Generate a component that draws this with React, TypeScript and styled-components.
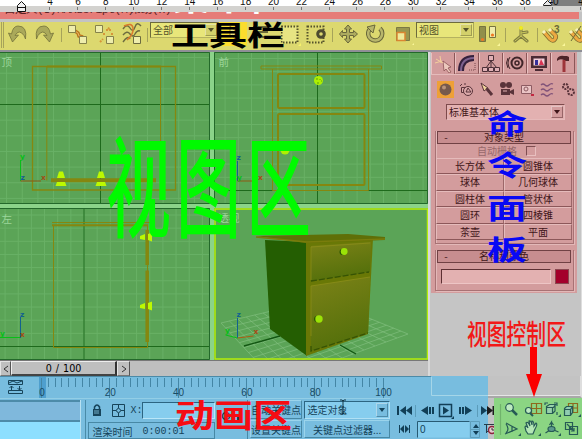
import React from "react";
import styled, { createGlobalStyle } from "styled-components";

const Global = createGlobalStyle`
  * { box-sizing: border-box; }
  html, body { margin: 0; overflow: hidden; }
  body { font-family: "Liberation Sans", "Noto Sans CJK SC", sans-serif; font-size: 12px; }
  svg { display: block; flex: none; }
`;

const Page = styled.div`
  position: relative;
  width: 582px;
  height: 439px;
  overflow: hidden;
  background: #c3c3c3;
  display: flex;
  flex-direction: column;
`;

/* ---------- header ---------- */
const Ruler = styled.div`
  height: 12px;
  background: #d3d2cf;
  overflow: hidden;
`;
const MenuStrip = styled.div`
  height: 7px;
  width: 579px;
  background: #e67c78;
  overflow: hidden;
  display: flex;
  gap: 9px;
  padding-left: 4px;
  color: #5b2224;
  white-space: nowrap;
`;
const MenuItem = styled.span<{ $w: number }>`
  width: ${(p) => p.$w}px;
  flex: none;
  font: 11.5px/12px "Liberation Mono", "Noto Sans CJK SC", monospace;
  letter-spacing: -0.5px;
  margin-top: -8px;
`;
const MenuTitle = styled.span`
  color: #fff;
  font: 700 38px/38px "Noto Sans CJK SC", sans-serif;
  height: 38px;
  margin-top: -31px;
  transform: scaleY(0.7);
`;
const Toolbar = styled.div`
  height: 28px;
  margin-top: 3px;
  background: #dcd86f;
  display: flex;
  align-items: flex-start;
  flex: none;
`;
const ToolSlot = styled.div<{ $w: number; $active?: boolean }>`
  width: ${(p) => p.$w}px;
  height: ${(p) => (p.$active ? 24 : 28)}px;
  flex: none;
  background: ${(p) => (p.$active ? "#fbdc2e" : "transparent")};
`;
const ToolCombo = styled.div<{ $w: number }>`
  width: ${(p) => p.$w}px;
  height: 16px;
  flex: none;
  display: flex;
  justify-content: space-between;
  padding-left: 2px;
  border: 1px solid #6d6b3c;
  border-right-color: #a9a75b;
  border-bottom-color: #b5b260;
  background: #e8e67a;
  color: #55532b;
  font: 10px/13px "Noto Sans CJK SC", sans-serif;
`;
const DropButton = styled.span<{ $bg: string; $fg: string }>`
  width: 12px;
  margin: 1px;
  display: flex;
  align-items: center;
  justify-content: center;
  background: ${(p) => p.$bg};
  border: 1px solid ${(p) => p.$fg}66;
  border-top-color: #ffffff66;
  border-left-color: #ffffff66;
  &::after {
    content: "";
    border: 3.5px solid transparent;
    border-top: 4px solid ${(p) => p.$fg};
    border-bottom: 0;
  }
`;
const HeaderEdge = styled.div`
  height: 2px;
  background: #8f8f96;
  flex: none;
`;

/* ---------- viewports ---------- */
const Main = styled.div`
  height: 308px;
  display: flex;
  flex: none;
`;
const Views = styled.div`
  width: 428px;
  display: grid;
  grid-template-columns: 210px 214px;
  grid-template-rows: 152px 152px;
  gap: 4px;
  background: #8bd389;
`;

/* ---------- command panel ---------- */
const PanelColumn = styled.div`
  flex: 1;
  border-left: 2px solid #d9d9d9;
  padding-left: 1px;
  border-right: 1px solid #dedede;
  background: #c5c5c5;
`;
const CommandPanel = styled.div`
  width: 146px;
  height: 241px;
  background: #d39c9d;
  color: #3f1519;
  font: 10px/12px "Noto Sans CJK SC", sans-serif;
  display: flex;
  flex-direction: column;
`;
const Tabs = styled.div`
  display: flex;
  height: 23px;
  flex: none;
  padding-top: 1px;
  border-bottom: 1px solid #e5bbbb;
`;
const Tab = styled.div<{ $on?: boolean }>`
  width: 24px;
  height: 21px;
  border-right: 1px solid #8a5658;
  border-left: 1px solid #e9c1c1;
  border-bottom: ${(p) => (p.$on ? 0 : "1px solid #b37b7c")};
  display: flex;
  align-items: center;
  justify-content: center;
`;
const Categories = styled.div`
  display: flex;
  height: 29px;
  flex: none;
  padding: 6px 0 0 6px;
  gap: 3px;
`;
const Category = styled.div<{ $on?: boolean }>`
  width: 17.4px;
  height: 17px;
  display: flex;
  align-items: center;
  justify-content: center;
  background: ${(p) => (p.$on ? "#eea037" : "transparent")};
`;
const KindCombo = styled.div`
  width: 119px;
  height: 16px;
  flex: none;
  margin: 0 0 11px 15px;
  border: 1px solid #7d4a4c;
  border-right-color: #e6baba;
  border-bottom-color: #e6baba;
  background: #e3b1b1;
  display: flex;
  justify-content: space-between;
  padding-left: 2px;
  line-height: 13px;
`;
const Rollout = styled.div<{ $h: number }>`
  width: 139px;
  height: ${(p) => p.$h}px;
  flex: none;
  margin: 0 0 6px 4px;
  border: 1px solid #a87274;
  box-shadow: inset 1px 0 #e3b8b8, 1px 1px #e3b8b8;
  border-top: 0;
`;
const RolloutTitle = styled.div`
  width: 134px;
  height: 13px;
  margin: 0 0 0 1px;
  border: 1px solid #704144;
  background: #c78d8f;
  display: grid;
  grid-template-columns: 16px 1fr 16px;
  text-align: center;
  line-height: 10px;
`;
const AutoGrid = styled.div`
  height: 14px;
  padding-left: 41px;
  display: flex;
  align-items: center;
  gap: 9px;
  color: #97686b;
`;
const Check = styled.span`
  width: 10px;
  height: 10px;
  border: 1px solid #7f4e51;
  border-right-color: #e8bfbf;
  border-bottom-color: #e8bfbf;
`;
const ObjectGrid = styled.div`
  display: grid;
  grid-template-columns: 68px 68px;
  grid-auto-rows: 16.4px;
`;
const ObjectButton = styled.div`
  text-align: center;
  line-height: 14px;
  border: 1px solid #e5bbbb;
  border-right-color: #9c6769;
  border-bottom-color: #8c5759;
`;
const NameRow = styled.div`
  display: flex;
  gap: 4px;
  margin: 6px 0 0 5px;
`;
const NameField = styled.div`
  width: 110px;
  height: 15px;
  background: #e3b1b1;
  border: 1px solid #5d3033;
  border-right-color: #edc5c5;
  border-bottom-color: #edc5c5;
`;
const Swatch = styled.div`
  width: 14px;
  height: 15px;
  background: #a4002b;
  border: 1px solid #8b4850;
`;

/* ---------- bottom ---------- */
const SliderRow = styled.div`
  height: 16px;
  display: flex;
  flex: none;
  background: #bfbfbf;
`;
const SliderTrack = styled.div`
  width: 428px;
  display: flex;
  border-top: 1px solid #777;
`;
const SliderArrow = styled.div<{ $w: number }>`
  width: ${(p) => p.$w}px;
  border: 1px solid #e4e4e4;
  border-right-color: #555;
  border-bottom-color: #777;
  display: flex;
  align-items: center;
  justify-content: center;
`;
const SliderThumb = styled.div`
  width: 106px;
  border: 1px solid #eee;
  border-right: 2px solid #333;
  border-bottom: 2px solid #444;
  text-align: center;
  font: 9.6px/13px "DejaVu Sans", sans-serif;
  word-spacing: 1px;
`;
const PanelTail = styled.div`
  flex: 1;
  border-left: 2px solid #d9d9d9;
  background: #c5c5c5;
  border-right: 1px solid #dedede;
`;
const Bottom = styled.div`
  display: flex;
  height: 63px;
`;
const Blue = styled.div`
  width: 488px;
  background: #78bddf;
  color: #14435a;
`;
const RightEnd = styled.div`
  flex: 1;
  display: flex;
  flex-direction: column;
`;
const RightGap = styled.div`
  height: 22px;
  border-bottom: 2px solid #a9a9a9;
  border-right: 2px solid #dedede;
  box-shadow: inset 0 -1px #e6e6e6;
`;
const NavGreen = styled.div`
  height: 41px;
  margin-left: 6px;
  background: #8bd583;
`;
const Controls = styled.div`
  display: flex;
  height: 39px;
  font: 10px/14px "Noto Sans CJK SC", sans-serif;
`;
const Listener = styled.div`
  width: 81px;
  display: flex;
  flex-direction: column;
  border-right: 1px solid #b7e1f2;
`;
const ListenerRow = styled.div<{ $bg: string }>`
  flex: 1;
  background: ${(p) => p.$bg};
  border-top: 2px solid #4d8ba9;
`;
const Status = styled.div`
  width: 131px;
  margin-left: 4px;
  border-left: 1px solid #498ba8;
`;
const CoordRow = styled.div`
  display: flex;
  height: 22px;
  align-items: center;
  padding: 0 0 2px 5px;
  gap: 4px;
`;
const CoordField = styled.div`
  flex: 1;
  height: 17px;
  margin-left: -5px;
  background: #86cdee;
  border: 1px solid #2c6582;
  border-right-color: #b9e6f8;
  border-bottom-color: #b9e6f8;
`;
const StatusText = styled.div`
  height: 17px;
  margin-left: 2px;
  padding-left: 4px;
  display: flex;
  gap: 10px;
  border: 1px solid #4788a5;
  line-height: 17px;
`;
const Mono = styled.span`
  font: 10px/17px "Liberation Mono", monospace;
`;
const KeyButton = styled.div`
  width: 33px;
  border-right: 1px solid #4788a5;
  padding: 8px 0 0 4px;
`;
const KeyColumn = styled.div<{ $w: number }>`
  width: ${(p) => p.$w}px;
  margin-left: 2px;
  display: grid;
  grid-template-rows: 19px 18px;
  gap: 1px;
`;
const BlueButton = styled.div`
  text-align: center;
  white-space: nowrap;
  line-height: 17px;
  border: 1px solid #9bd4eb;
  border-right-color: #4788a5;
  border-bottom-color: #4788a5;
`;
const BlueCombo = styled.div`
  display: flex;
  justify-content: space-between;
  margin-top: 1px;
  padding-left: 2px;
  border: 1px solid #2c6582;
  border-right-color: #b0e0f4;
  border-bottom-color: #b0e0f4;
  background: #86cdee;
  line-height: 15px;
`;
const PlaybackArt = styled.svg`
  overflow: visible;
`;

/* ---------- annotations lying over the window ---------- */
const Note = styled.div<{ $x: number; $y: number; $size: number; $sy: number; $c: string; $weight?: number; $gap?: number }>`
  position: absolute;
  left: ${(p) => p.$x}px;
  top: ${(p) => p.$y}px;
  color: ${(p) => p.$c};
  font: ${(p) => p.$weight || 700} ${(p) => p.$size}px/1 "Noto Sans CJK SC", sans-serif;
  letter-spacing: ${(p) => p.$gap || 0}px;
  white-space: nowrap;
  transform: scaleY(${(p) => p.$sy});
  transform-origin: 0 0;
`;
const Arrow = styled.svg`
  position: absolute;
  left: 525px;
  top: 347px;
`;
const Cursor = styled.svg`
  position: absolute;
  left: 339px;
  top: 399px;
`;

const range = (a: number, b: number, s: number) => {
  const out: number[] = [];
  for (let v = a; v <= b; v += s) out.push(v);
  return out;
};

function TopRuler() {
  return (
    <svg width="582" height="12">
      <rect width="582" height="6" fill="#fff" />
      <rect x="552" width="30" height="6" fill="#7e7e7e" />
      {range(0, 19, 1).map((i) => (
        <g key={i}>
          <text x={50 + i * 27.95} y="4.500" textAnchor="middle" fontSize="10" fontFamily="Liberation Sans" fill="#111">
            {4 + i * 2 > 40 ? "4" : 4 + i * 2}
          </text>
          <path d={`M${Math.round(50 + i * 27.95) - 0.5} 7v3`} stroke="#777" />
        </g>
      ))}
      <path d="M17.500 11.500v-6l4-4 4 4v6zM17.500 7.500h8" fill="#f1f1f1" stroke="#111" />
      <path d="M543.500 5.500v-1l4-4 4 4v1z" fill="#e9e9e9" stroke="#222" />
    </svg>
  );
}

function Grid({ x0, x1, y0, y1, cx, cy, s }: { x0: number; x1: number; y0: number; y1: number; cx: number; cy: number; s: number }) {
  const xs = range(cx - Math.floor((cx - x0) / s) * s, x1, s);
  const ys = range(cy - Math.floor((cy - y0) / s) * s, y1, s);
  return (
    <>
      <rect x={x0} y={y0} width={x1 - x0} height={y1 - y0} fill="#5ba457" />
      <path
        d={xs.map((x) => `M${x} ${y0}V${y1}`).join("") + ys.map((y) => `M${x0} ${y}H${x1}`).join("")}
        stroke="#69b166"
        fill="none"
      />
      <path d={`M${cx} ${y0}V${y1}M${x0} ${cy}H${x1}`} stroke="#1e6a1c" />
    </>
  );
}

const label = { fontSize: 10.5, fill: "#9bd69a", fontFamily: "Noto Sans CJK SC" };
const axis = { fontSize: 7.5, fontWeight: 700, fontFamily: "DejaVu Sans" };

function TopView() {
  return (
    <svg width="210" height="152" viewBox="0 52 210 152">
      <Grid x0={0} x1={210} y0={52} y1={204} cx={100.5} cy={104.5} s={15.65} />
      <path d="M0 52.500H209.500V203.500H0" fill="none" stroke="#23692a" />
      <text x="1.500" y="66" {...label}>顶</text>
      <g fill="none" stroke="#85870f">
        <path d="M32.500 66.500H175.500V190H32.500z" strokeWidth="1.300" />
        <path d="M46.800 180.500V66.500M160.500 180V66.500" />
        <path d="M47 66.500H161" strokeWidth="2" />
        <path d="M51 180.200H156" strokeWidth="4" />
      </g>
      {[61, 101].map((x) => (
        <path key={x} d={`M${x - 2} 171.500h4l2 6.500h-8zM${x - 4} 182h8l1.500 4h-11z`} fill="#bdf900" />
      ))}
      <path d="M20.500 181V160" stroke="#08bf18" />
      <path d="M20.500 181H41" stroke="#8f5914" />
      <text x="20" y="159" fill="#08bf18" {...axis}>y</text>
      <text x="41" y="180" fill="#a04d18" {...axis}>x</text>
      <text x="20.500" y="180" fill="#12618f" {...axis}>z</text>
    </svg>
  );
}

function FrontView() {
  return (
    <svg width="214" height="152" viewBox="214 52 214 152">
      <Grid x0={214} x1={428} y0={52} y1={204} cx={317.5} cy={190.5} s={13.2} />
      <path d="M214.500 52.500H427.500V203.500H214.500z" fill="none" stroke="#23692a" />
      <text x="218.500" y="66" {...label}>前</text>
      <g fill="none" stroke="#85870f">
        <path d="M261 66h120.500v3H261zM272.500 69v121.500h96V69" />
        <rect x="278" y="74" width="86.500" height="34" rx="1" strokeWidth="2" />
        <rect x="278" y="114" width="86.500" height="71" rx="1" strokeWidth="2" />
      </g>
      <circle cx="318.500" cy="80.500" r="4.500" fill="#adf000" />
      <path d="M317 78v2m3-1v1m-2 2v2m3-3h1" stroke="#5c9d15" />
      <circle cx="285" cy="150" r="4.500" fill="#adf000" />
      <path d="M237.500 181V161" stroke="#12618f" />
      <path d="M237.500 181H257" stroke="#8f5914" />
      <text x="236.500" y="160" fill="#12618f" {...axis}>z</text>
      <text x="258" y="180" fill="#a04d18" {...axis}>x</text>
      <text x="237" y="180" fill="#08bf18" {...axis}>y</text>
    </svg>
  );
}

function LeftView() {
  return (
    <svg width="210" height="152" viewBox="0 208 210 152">
      <Grid x0={0} x1={210} y0={208} y1={360} cx={84} cy={346.5} s={13.15} />
      <path d="M0 208.500H209.500V359.500H0" fill="none" stroke="#23692a" />
      <text x="1.500" y="222.500" {...label}>左</text>
      <path d="M53.500 225v122.500h94V225M52 222.500h100" fill="none" stroke="#85870f" />
      <path d="M52 225.200h96" stroke="#85870f" strokeWidth="2" />
      <path d="M147.200 230v35M147.200 270.500v71.500" stroke="#85870f" strokeWidth="3.500" />
      {[237, 306].map((y) => (
        <path key={y} d={`M140 ${y - 1}l5-2v6l-5-1zM148 ${y - 3}l4-1.500v9l-4-1.500z`} fill="#bdf900" />
      ))}
      <path d="M20.500 338V317" stroke="#12618f" />
      <path d="M0 337.500H20" stroke="#08bf18" />
      <text x="20" y="316.500" fill="#12618f" {...axis}>z</text>
      <text x="20" y="336.500" fill="#a04d18" {...axis}>x</text>
      <text x="0" y="336" fill="#08bf18" {...axis}>y</text>
    </svg>
  );
}

function PerspectiveView() {
  const a = [221, 323], b = [322, 299], c = [408, 334], d = [276, 382];
  const mix = (p: number[], q: number[], t: number) => `${p[0] + (q[0] - p[0]) * t} ${p[1] + (q[1] - p[1]) * t}`;
  let lines = "";
  for (let i = 0; i <= 12; i++) {
    const t = i / 12;
    lines += `M${mix(a, b, t)}L${mix(d, c, t)}M${mix(a, d, t)}L${mix(b, c, t)}`;
  }
  return (
    <svg width="214" height="152" viewBox="214 208 214 152">
      <defs>
        <linearGradient id="door" x1="0" y1="0" x2="0.300" y2="1">
          <stop offset="0" stopColor="#7c8217" />
          <stop offset="1" stopColor="#54700b" />
        </linearGradient>
      </defs>
      <rect x="214" y="208" width="214" height="152" fill="#5ba457" />
      <path d={lines} stroke="#81bf7e" strokeWidth="0.700" fill="none" />
      <path d="M244 346l36-10M340 345l16 9" stroke="#125612" strokeWidth="1.300" />
      <text x="218.500" y="222" {...label}>透视</text>
      <path d="M265 240l42 2v114l-37-27z" fill="#245e02" />
      <path d="M306 242l67-4-5 96-62 22z" fill="#697806" />
      <path d="M256 236l92-2 37 3v3l-80 3z" fill="#5f6f07" />
      <path d="M256 237l51 5 78-3" fill="none" stroke="#797d0c" strokeWidth="1.500" />
      <path d="M311 246l60-4-1 30-59 9z" fill="url(#door)" />
      <path d="M311 286l59-9-2 56-57 18z" fill="url(#door)" />
      <path d="M311 281l58-9M311 346v5l57-18" fill="none" stroke="#365304" strokeWidth="1.300" strokeDasharray="6 2" />
      <path d="M311 280V247l59-4M311 336v-50l59-9" fill="none" stroke="#8b8e19" strokeWidth="0.800" />
      <circle cx="342.500" cy="252" r="3" fill="#295700" />
      <circle cx="344.200" cy="251.500" r="3.400" fill="#9be307" />
      <circle cx="317" cy="319" r="3" fill="#295700" />
      <circle cx="319" cy="319" r="3.700" fill="#9be307" />
      <path d="M237.500 338V318" stroke="#12618f" />
      <path d="M237.500 338l16-2" stroke="#ad5c12" />
      <path d="M237.500 338l-12-3" stroke="#08bf18" />
      <text x="236.500" y="317" fill="#12618f" {...axis}>z</text>
      <text x="253.500" y="334" fill="#a84d18" {...axis}>x</text>
      <text x="225" y="333" fill="#08bf18" {...axis}>y</text>
      <rect x="215" y="209" width="212.500" height="150" fill="none" stroke="#b6ec0a" strokeWidth="1.500" />
    </svg>
  );
}

/* Tool icons are drawn in a cell that is 28 high */
const toolIcons: Record<string, React.ReactNode> = {
  undo: <path d="M.5 11l4 9 6-7-3.500 .5q4-7 9 0l1.500 3.500q2-13-7.500-13-5 0-6.500 8z" fill="#aaa95a" stroke="#74723b" strokeWidth=".8" />,
  redo: <path d="M18.500 11l-4 9-6-7 3.500 .5q-4-7-9 0l-1.500 3.500q-2-13 7.500-13 5 0 6.500 8z" fill="#aaa95a" stroke="#74723b" strokeWidth=".8" />,
  link: (
    <g stroke="#85824b">
      <path d="M7 9l3 2 1 3 4 1" fill="none" stroke="#bd741d" strokeWidth="3.500" />
      <path d="M7 9l3 2 1 3 4 1" fill="none" stroke="#e2ba61" strokeWidth="1" />
      <path d="M.5 3.500h7v7h-7zM11.500 14.500h7v7h-7z" fill="#eeedac" />
    </g>
  ),
  unlink: (
    <g stroke="#85824b">
      <path d="M8 12h3m4-5v3m-2-3l2-2M5 20l3-3m3-9h3m2 4h2" stroke="#d79538" fill="none" strokeDasharray="2 1" strokeWidth="2" />
      <path d="M.5 3.500h7v7h-7zM11.500 14.500h7v7h-7z" fill="#eeedac" />
    </g>
  ),
  bind: (
    <g fill="none" stroke="#6d6c3f" strokeWidth="1.400">
      <path d="M1 7q4-6 7-1t5-1 6-1M1 13q4-5 7-1t5 0 5-3M1 20q5-7 7-3" />
      <path d="M2 4q8-4 9 2t-6 12" stroke="#d87a2d" strokeWidth="1.500" />
      <path d="M11.500 14.500h7v7h-7z" fill="#eeedac" strokeWidth="1" />
    </g>
  ),
  arrow: <path d="M11 4v11l3-2 2 5 2-1-2-5h4z" fill="#eee683" stroke="#9f8122" />,
  names: <path d="M6 5h3M11 5h10M6 10h3M11 10h10M6 15h3M11 15h10" stroke="#6b6938" strokeWidth="2" />,
  marquee: (
    <g>
      <path d="M.5 4.500h16v16h-16z" fill="#e7e583" stroke="#55522b" strokeWidth="2" strokeDasharray="1.500 1.500" />
      <path d="M17 24h3v-3z" fill="#f7f26c" />
    </g>
  ),
  crossing: (
    <g>
      <path d="M1.500 4.500h16v16h-16z" fill="none" stroke="#55522b" strokeWidth="2" strokeDasharray="1.500 1.500" />
      <circle cx="15" cy="12" r="3.300" fill="#dcd86f" stroke="#4d4b2f" strokeWidth="3" />
    </g>
  ),
  move: <path d="M9 3l3.500 4h-2v3.500h4v-2l4 3.500-4 3.500v-2h-4V17h2L9 21l-3.500-4h2v-3.500h-4v2L.5 12l3-3.500v2h4V7h-2z" fill="#adab5f" stroke="#69673b" />,
  rotate: (
    <g fill="none">
      <path d="M3.500 7.500A7 7 0 1 0 14 6.500" stroke="#69673b" strokeWidth="4.500" />
      <path d="M3.500 7.500A7 7 0 1 0 14 6.500" stroke="#b8b66b" strokeWidth="2.500" />
      <path d="M1 5l8-2-2 8z" fill="#b8b66b" stroke="#69673b" />
    </g>
  ),
  scale: (
    <g>
      <path d="M.5 5.500h13v13H.5z" fill="#99974e" stroke="#7b7944" />
      <path d="M1 10.500h8v8H1z" fill="#eeea9b" stroke="#db8630" strokeWidth="1.500" />
    </g>
  ),
  pivot: (
    <g stroke="#777440">
      <path d="M5.500 4.500h6v15h-6z" fill="#918f4b" />
      <path d="M15.500 4.500h6v11h-6z" fill="#efecaa" />
      <circle cx="8.500" cy="17.500" r="1.600" fill="#f07923" stroke="none" />
      <circle cx="18.500" cy="13" r="1.600" fill="#f07923" stroke="none" />
    </g>
  ),
  manipulate: (
    <g fill="none" strokeLinecap="round">
      <path d="M8 6v8l6 5M8 14l-6 5M8 11l6-1" stroke="#7f7d41" strokeWidth="3" />
      <path d="M8 6v8l6 5M8 14l-6 5M8 11l6-1" stroke="#cbc95e" strokeWidth="1" />
      <circle cx="8" cy="6" r="2" fill="#f1ec1f" />
    </g>
  ),
  magnet: (
    <g fill="none">
      <path d="M2 10l6 7q3 3 5 0t-1-5l-4-4" stroke="#7b682e" strokeWidth="4.500" />
      <path d="M2 10l6 7q3 3 5 0t-1-5l-4-4" stroke="#edaa42" strokeWidth="3" />
      <path d="M1 9l2 2m4-4l2 2" stroke="#f5f1bf" strokeWidth="3" />
    </g>
  ),
  sep: <path d="M1.500 6v14" stroke="#a6a35a" />,
};
const Tool = ({ n, w, active, children }: { n: string; w: number; active?: boolean; children?: React.ReactNode }) => (
  <ToolSlot $w={w} $active={active}>
    <svg width={w} height={active ? 24 : 28}>{toolIcons[n]}{children}</svg>
  </ToolSlot>
);

function ToolbarRow() {
  return (
    <Toolbar>
      <ToolSlot $w={8}>
        <svg width="8" height="28"><path d="M1.500 0v26M3.500 0v26" stroke="#a6a35a" /></svg>
      </ToolSlot>
      <Tool n="undo" w={27} />
      <Tool n="redo" w={25} />
      <Tool n="sep" w={8} />
      <Tool n="link" w={27} />
      <Tool n="unlink" w={27} />
      <Tool n="bind" w={24} />
      <Tool n="sep" w={4} />
      <ToolCombo $w={69}><span>全部</span><DropButton $bg="#d3d06b" $fg="#55532b" /></ToolCombo>
      <Tool n="arrow" w={28} active />
      <Tool n="names" w={34} />
      <Tool n="marquee" w={25} />
      <Tool n="crossing" w={25} />
      <Tool n="sep" w={8} />
      <Tool n="move" w={27} />
      <Tool n="rotate" w={30} />
      <Tool n="scale" w={20}><path d="M16 23h2v-2z" fill="#faf69a" /></Tool>
      <ToolCombo $w={58}><span>视图</span><DropButton $bg="#d3d06b" $fg="#55532b" /></ToolCombo>
      <Tool n="pivot" w={30}><path d="M23 24h3v-3z" fill="#faf69a" /></Tool>
      <Tool n="sep" w={9} />
      <Tool n="manipulate" w={23} />
      <Tool n="sep" w={6} />
      <Tool n="magnet" w={27}>
        <text x="12" y="11" fontSize="10" fontWeight="700" fontFamily="Liberation Sans" fill="#6b6938">3</text>
        <path d="M20 24h3v-3z" fill="#faf69a" />
      </Tool>
      <Tool n="magnet" w={13}><path d="M2 19L12 4" stroke="#6b6938" /></Tool>
    </Toolbar>
  );
}

const tabIcons = [
  <g><path d="M9 6l8 6-3 1 3 4-2 1-3-4-2 2z" fill="#ecc8bd" stroke="#8d5355" strokeWidth=".8" /><path d="M2 4l7 4M6 1l1 7M1 8l7-2" stroke="#f4cf9c" /></g>,
  <g fill="none"><path d="M3 17Q3 4 16 4" stroke="#35203c" strokeWidth="6" /><path d="M3 17Q3 4 16 4" stroke="#7d618e" strokeWidth="2" /><path d="M11 16h6V9" stroke="#76484c" strokeDasharray="1 1" /></g>,
  <g fill="#dfb0b5" stroke="#4d3038"><path d="M9 6v9M9 7l-5 7M9 7l6 7" /><path d="M6.500 1.500h5v5h-5zM.5 13.500h5v4h-5zM6.500 13.500h5v4h-5zM12.500 13.500h5v4h-5z" /></g>,
  <g fill="none" stroke="#402529"><circle cx="11" cy="9" r="5.500" strokeWidth="2" /><circle cx="11" cy="9" r="2" strokeWidth="1.500" /><path d="M4 3Q0 9 4 15M2 4q-3 5 0 10" /></g>,
  <g><path d="M1 2h16v12H1z" fill="#4b2b34" /><path d="M3.500 4.500h11v7h-11z" fill="#f1cfd8" /><path d="M5 6h3v5H5z" fill="#352f99" /><path d="M11 5l3 6H9z" fill="#d93453" /><path d="M5 16h8" stroke="#4b2b34" strokeWidth="2" /></g>,
  <g><path d="M3 5q2-4 7-3h3l2 1v4h-5V6Q6 4 3 7z" fill="#4e2529" /><path d="M10 6v12" stroke="#9e353a" strokeWidth="3" /></g>,
];
const ink = "#59333a";
const categoryIcons = [
  <g><circle cx="8.500" cy="8.500" r="6" fill="#77594c" /><circle cx="7" cy="6.500" r="2" fill="#b9947b" /></g>,
  <g fill="#dca9aa" stroke={ink}><path d="M3.500 6.500h7v5h-7z" /><circle cx="10" cy="10" r="4.500" /><path d="M8 11l2-4 3 4zM2 5l2-2M7 2v2" /></g>,
  <g><path d="M3 2l3 8 4-3zM8 7l5 7" fill="#f0d39b" stroke={ink} /><path d="M9 8l5 6" stroke={ink} strokeWidth="3" /></g>,
  <g fill={ink}><circle cx="5" cy="4" r="3" /><circle cx="11" cy="4" r="3" /><path d="M3 8h9v6H3zM12 10l4-2v6l-4-2z" /><path d="M5 10h4" stroke="#e2b0b1" /></g>,
  <g stroke="#8d5b62" fill="#eac4c5"><path d="M2.500 4.500h10v8h-10z" /><circle cx="7" cy="8" r="2" /><path d="M12 14h3" stroke="#c22841" strokeWidth="2" /></g>,
  <path d="M2 4q2-2 4 0t4 0 4-1M2 9q2-2 4 0t4 0 4-1M2 14q2-2 4 0t4 0 4-1" fill="none" stroke="#805279" strokeWidth="1.300" />,
  <g fill="none" stroke={ink} strokeWidth="2"><circle cx="5.500" cy="5.500" r="2.500" strokeDasharray="2 1" /><circle cx="11" cy="11" r="3" strokeDasharray="2 1" /></g>,
];

const RolloutHead = ({ children }: { children: React.ReactNode }) => (
  <RolloutTitle><span>-</span><span>{children}</span></RolloutTitle>
);

function CommandArea() {
  return (
    <CommandPanel>
      <Tabs>{tabIcons.map((icon, i) => <Tab key={i} $on={i === 0}><svg width="18" height="18">{icon}</svg></Tab>)}</Tabs>
      <Categories>{categoryIcons.map((icon, i) => <Category key={i} $on={i === 0}><svg width="17" height="17">{icon}</svg></Category>)}</Categories>
      <KindCombo><span>标准基本体</span><DropButton $bg="#d39c9d" $fg="#3f1519" /></KindCombo>
      <Rollout $h={113}>
        <RolloutHead>对象类型</RolloutHead>
        <AutoGrid>自动栅格<Check /></AutoGrid>
        <ObjectGrid>
          {["长方体", "圆锥体", "球体", "几何球体", "圆柱体", "管状体", "圆环", "四棱锥", "茶壶", "平面"].map((t) => (
            <ObjectButton key={t}>{t}</ObjectButton>
          ))}
        </ObjectGrid>
      </Rollout>
      <Rollout $h={41}>
        <RolloutHead>名称和颜色</RolloutHead>
        <NameRow><NameField /><Swatch /></NameRow>
      </Rollout>
    </CommandPanel>
  );
}

function TimeRuler() {
  return (
    <svg width="488" height="24">
      <path d="M0 .5H431" stroke="#4c8aa7" />
      <path d="M0 22.500H390" stroke="#93cee6" />
      <rect x="39" y="1" width="7" height="21" fill="#4e9fce" />
      {range(0, 50, 1).map((i) => (
        <path key={i} d={`M${Math.round(42 + i * 6.83) - 0.5} 2v${i % 10 === 0 ? 20 : 9}`} stroke="#4486a5" />
      ))}
      {range(0, 5, 1).map((i) => (
        <text key={i} x={42 + i * 68.3} y="20" textAnchor="middle" fontFamily="Liberation Sans" fontSize="10" fill="#184b65">{i * 20}</text>
      ))}
      <g fill="none" stroke="#17445a">
        <path d="M8.500 4.500h14v4h-14zM8.500 17.500h14v-3h-14zM9 7l4-2 4 2 5-2M11.500 14v-4m-2 2l2-2 2 2M19.500 10v4m-2-2l2 2 2-2" />
      </g>
      <path d="M431.500 1v18.500H488" stroke="#a5d6e8" fill="none" />
    </svg>
  );
}

function Playback() {
  return (
    <PlaybackArt width="98" height="39" fill="#123f57">
      <path d="M7 6h2v9H7zM16 6v9l-6-4.500zM22 6v9l-6-4.500zM38 6v9l-7-4.500zM39 7h2v7h-2zM42 7h2v7h-2zM69 7h2v7h-2zM72 7h2v7h-2zM75 6v9l7-4.500zM91 6v9l6-4.500z" />
      <path d="M97 6v9l6-4.500zM102.500 6h2v9h-2z" fill="#1c1c1c" />
      <path d="M49.500 4.500h12v12h-12z" fill="none" stroke="#123f57" strokeWidth="1.500" />
      <path d="M53 6.500v8l6-4zM61 19h3v-3z" />
      <path d="M25.500 5v12M87.500 5v12" stroke="#5b9cba" />
      <path d="M9 25h1v8H9zM14 25v8l-4-4zM15 25v8l4-4zM19 25h1v8h-1z" />
      <path d="M27.500 21.500h52v16h-52z" fill="#86cdee" />
      <path d="M27.500 37.500v-16h52" fill="none" stroke="#275a73" />
      <text x="30" y="33" fontFamily="Liberation Sans" fontSize="10">0</text>
      <path d="M83 28l3-4 3 4zM83 31l3 4 3-4z" />
      <path d="M80.500 21.500h9v16h-9zM80.500 29.500h9" fill="none" stroke="#5f9fbc" />
      <path d="M96.500 33V24M94 24.500h10M96 31.500h5" fill="none" stroke="#263c47" />
      <circle cx="102" cy="30" r="3.500" fill="#e3cdd0" stroke="#8b243b" strokeWidth="1.500" />
      <path d="M102 28v2h2" fill="none" stroke="#333" />
    </PlaybackArt>
  );
}

const dark = "#265a55";
function NavIcons() {
  return (
    <svg width="88" height="41" fill="none" stroke={dark} strokeWidth="1.200">
      <path d="M6.500 6v31" stroke="#70b36c" />
      <circle cx="15.500" cy="9.500" r="3.800" fill="#bdebc0" /><path d="M18 12l5 5" strokeWidth="2.500" />
      <g stroke="#8d691e"><path d="M37.500 5.500h10v10h-10zM42.500 5.500v10M37.500 10.500h10" /></g>
      <circle cx="34.500" cy="12.500" r="3" fill="#bdebc0" /><path d="M36 15l3 3" strokeWidth="2" />
      <path d="M52.500 8.500l3-2h6l-2 3h-7zM52.500 9.500h6v6h-6zM59 15l2-2V7M51 7V5h3m6 0h3v3m0 6v3" fill="#98d0ab" />
      <g stroke="#8d691e"><path d="M74.500 5.500h9v9h-9zM79 5v9M74 10h9" /></g>
      <path d="M70.500 10.500l2-2h6v6l-2 3h-6zM70.500 11.500h6v6M76.500 11.500l2-3" fill="#8fccb0" />
      <path d="M12 25l11 6-12 5M18 28v6M12 26q4 5 0 9" />
      <path d="M32 33l-1-4q1-2 3 1l-2-5q2-2 4 3l-1-5q2-1 3 4v-4q2 0 2 5l2-3q2 1-1 6l-2 5h-5z" fill="#b4e8b5" />
      <path d="M57.500 31V24l-2 3m2-3l2 3M57.500 31l7 3M57.500 31l-6 4" /><ellipse cx="57.500" cy="31" rx="3.500" ry="2.500" fill="#5c988c" />
      <path d="M71.500 24.500h7v7h-7zM75.500 28.500h8v8h-8zM73 26l7 7m-3 0h3v-3" />
      <path d="M24 38h3v-3zM44 38h3v-3zM64 38h3v-3zM64 19h3v-3zM84 19h3v-3z" fill={dark} stroke="none" />
    </svg>
  );
}

export default function App() {
  return (
    <>
      <Global />
      <Page>
        <Ruler><TopRuler /></Ruler>
        <MenuStrip>
          <MenuItem $w={44}>自定义(U)</MenuItem>
          <MenuItem $w={64}>MAXScript(M)</MenuItem>
          <MenuItem $w={33}>帮助(H)</MenuItem>
          <MenuTitle>菜单栏</MenuTitle>
        </MenuStrip>
        <ToolbarRow />
        <HeaderEdge />
        <Main>
          <Views><TopView /><FrontView /><LeftView /><PerspectiveView /></Views>
          <PanelColumn><CommandArea /></PanelColumn>
        </Main>
        <SliderRow>
          <SliderTrack>
            <SliderArrow $w={11}><svg width="6" height="8"><path d="M5 1L1 4l4 3" fill="none" stroke="#333" /></svg></SliderArrow>
            <SliderThumb>0 / 100</SliderThumb>
            <SliderArrow $w={13}><svg width="6" height="8"><path d="M1 1l4 3-4 3" fill="none" stroke="#333" /></svg></SliderArrow>
          </SliderTrack>
          <PanelTail />
        </SliderRow>
        <Bottom>
          <Blue>
            <TimeRuler />
            <Controls>
              <Listener><ListenerRow $bg="#7fb8dc" /><ListenerRow $bg="#8ddfff" /></Listener>
              <Status>
                <CoordRow>
                  <svg width="12" height="14"><path d="M2 6h8v7H2z" fill="#17445a" /><path d="M3.500 6V4q2.500-4 5 0v2" fill="none" stroke="#17445a" strokeWidth="1.500" /><path d="M3 8h5M3 10h5" stroke="#74afc9" /></svg>
                  <svg width="20" height="14"><g fill="none" stroke="#17445a"><path d="M5.500 1.500h12v12h-12zM11.500 1v4m0 5v4M5 7.500h4m5 0h4" /><circle cx="11.500" cy="7.500" r="2" /></g></svg>
                  <Mono>X:</Mono><CoordField />
                </CoordRow>
                <StatusText><span>渲染时间</span><Mono>0:00:01</Mono></StatusText>
              </Status>
              <KeyButton><svg width="26" height="16"><circle cx="7" cy="8" r="3.500" fill="none" stroke="#17445a" strokeWidth="1.500" /><path d="M11 8h12M19 8v4m3-4v3" stroke="#17445a" strokeWidth="2" /></svg></KeyButton>
              <KeyColumn $w={53}><BlueButton>自动关键点</BlueButton><BlueButton>设置关键点</BlueButton></KeyColumn>
              <KeyColumn $w={86}>
                <BlueCombo><span>选定对象</span><DropButton $bg="#78bddf" $fg="#14435a" /></BlueCombo>
                <BlueButton>关键点过滤器...</BlueButton>
              </KeyColumn>
              <Playback />
            </Controls>
          </Blue>
          <RightEnd><RightGap /><NavGreen><NavIcons /></NavGreen></RightEnd>
        </Bottom>

        <Note $x={171} $y={20} $size={38} $sy={0.74} $c="#000">工具栏</Note>
        <Note $x={106} $y={127} $size={65} $sy={1.7} $c="#00fa00" $weight={500} $gap={5}>视图区</Note>
        <Note $x={487} $y={107.5} $size={40} $sy={0.69} $c="#0808f4">命</Note>
        <Note $x={487} $y={150} $size={40} $sy={0.7} $c="#0808f4">令</Note>
        <Note $x={487} $y={193} $size={40} $sy={0.7} $c="#0808f4">面</Note>
        <Note $x={487} $y={235} $size={40} $sy={0.68} $c="#0808f4">板</Note>
        <Note $x={467} $y={318.5} $size={19.8} $sy={1.42} $c="#f21818" $weight={500}>视图控制区</Note>
        <Note $x={175} $y={397} $size={39} $sy={0.82} $c="#f50d13">动画区</Note>
        <Arrow width="18" height="51"><path d="M5 0h7v27h5L9 50 1 27h4z" fill="#fb0000" /></Arrow>
        <Cursor width="9" height="16"><path d="M1 1h2l1 1 1-1h2M4 2v12M1 15h2l1-1 1 1h2" fill="none" stroke="#173848" /></Cursor>
      </Page>
    </>
  );
}
